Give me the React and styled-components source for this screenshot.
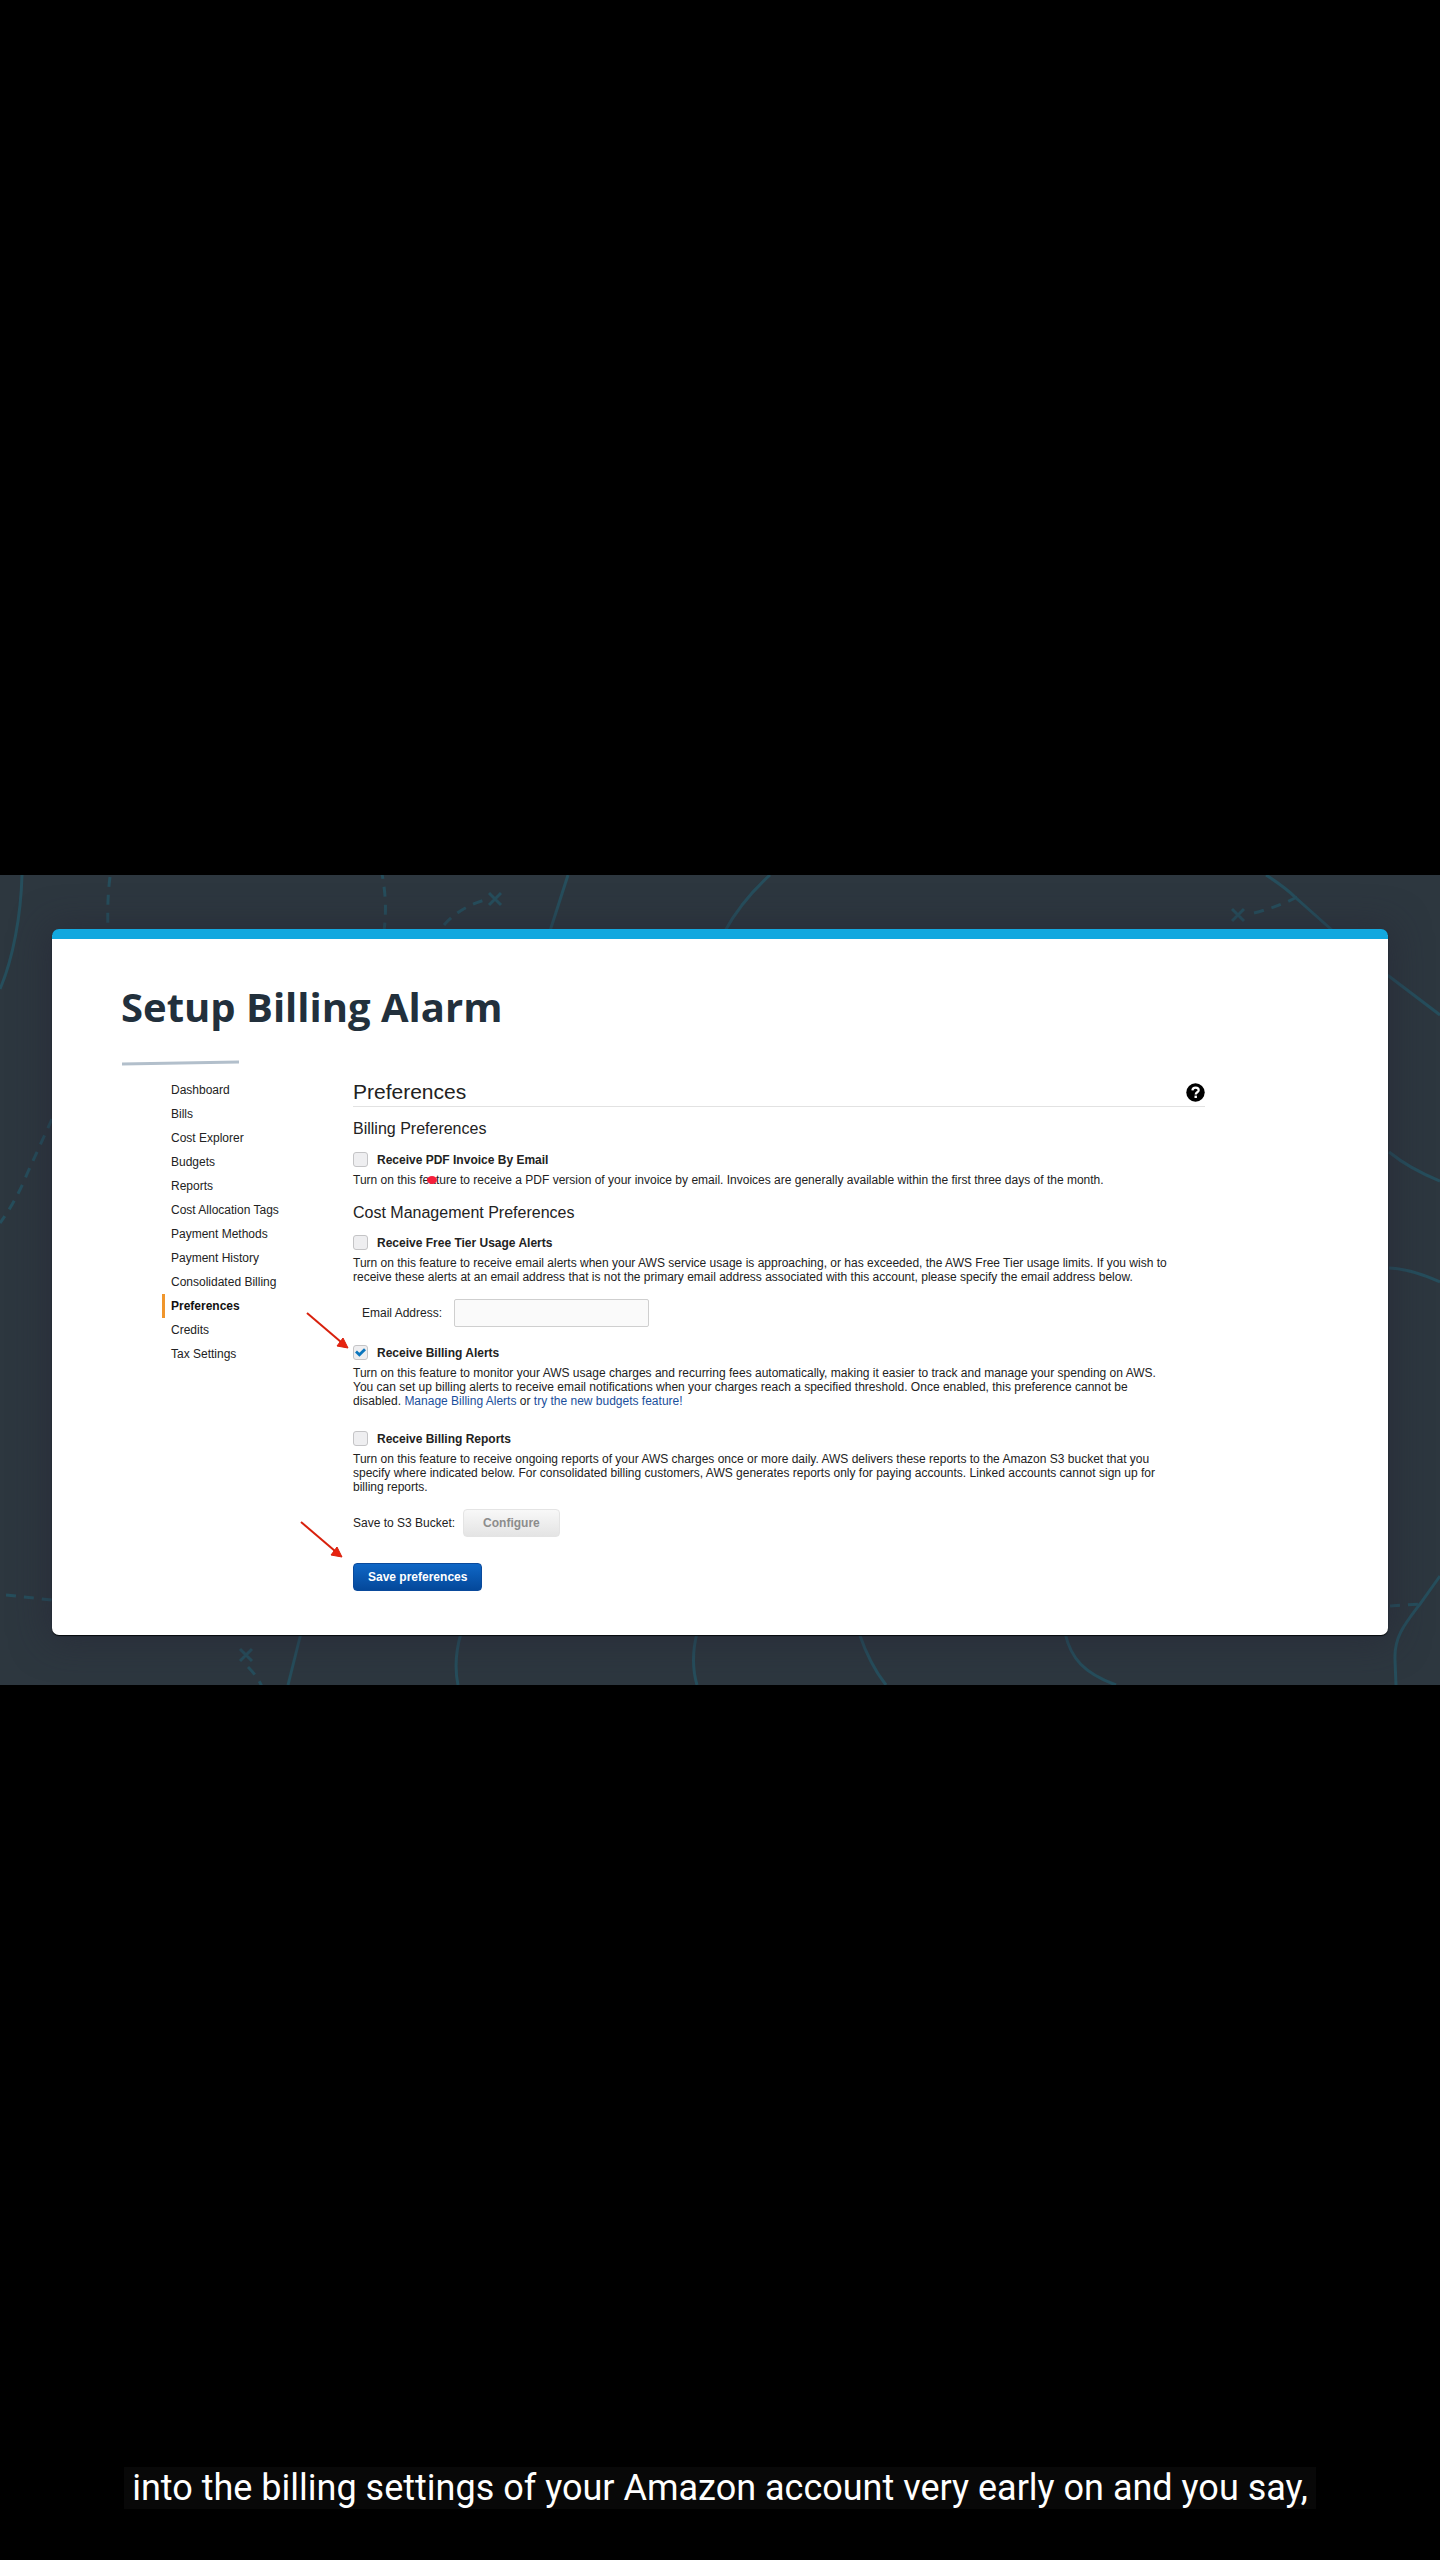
import React, { useState } from "react";
import styled, { createGlobalStyle, css } from "styled-components";

const GlobalStyle = createGlobalStyle`
  *, *::before, *::after { box-sizing: border-box; }
  body { margin: 0; background: #000; }
`;

const Player = styled.div`
  min-height: 100vh;
  display: grid;
  grid-template-columns: minmax(0, 1fr);
  grid-template-rows: minmax(0, 1fr) auto minmax(0, 1fr);
  background: #000;
`;

const Stage = styled.main`
  grid-row: 2;
  position: relative;
  isolation: isolate;
  display: flex;
  aspect-ratio: 16 / 9;
  padding: 54px 52px 50px;
  background: #2d373f;
  overflow: hidden;
`;

const MapSvg = styled.svg`
  position: absolute;
  inset: 0;
  z-index: -1;
  width: 100%;
  height: 100%;
  fill: none;
  stroke: #264e5c;
  stroke-width: 3;
`;

const Card = styled.section`
  flex: 1;
  min-width: 0;
  border-top: 10px solid #12a8df;
  border-radius: 7px;
  background: #fff;
  box-shadow: 0 1px 1px #05090c, 0 2px 36px 4px rgba(38, 38, 54, 0.6);
  padding: 36px 69px 0;
`;

const Title = styled.h1`
  margin: 0;
  font: 700 40px/64px "Open Sans", "Noto Sans", sans-serif;
  color: #22303c;
`;

const Rule = styled.svg`
  display: block;
  margin-top: 21px;
`;

const Body = styled.div`
  position: relative;
  display: flex;
  gap: 61px;
  padding-left: 41px;
  margin-top: 12px;
  font: 12px/14px "Liberation Sans", Arial, sans-serif;
  color: #222;
`;

const Menu = styled.nav`
  flex: none;
  width: 130px;
`;

const MenuLink = styled.a`
  display: block;
  padding-left: 6px;
  border-left: 3px solid ${(p) => (p.$active ? "#f0962c" : "transparent")};
  font-weight: ${(p) => (p.$active ? 700 : 400)};
  line-height: 24px;
  color: ${(p) => (p.$active ? "#111" : "#222")};
  text-decoration: none;
`;

const Content = styled.form`
  flex: 1;
  min-width: 0;
  max-width: 852px;
`;

const Heading = styled.div`
  display: flex;
  justify-content: space-between;
  align-items: center;
  height: 29px;
  border-bottom: 1px solid #e2e2e2;
`;

const PageTitle = styled.h2`
  margin: 0;
  font-size: 21px;
  font-weight: 400;
  line-height: 28px;
`;

const HelpButton = styled.button`
  display: flex;
  padding: 0;
  border: 0;
  background: none;
`;

const SectionTitle = styled.h3`
  margin: ${(p) => p.$top}px 0 0;
  font-size: 16px;
  font-weight: 400;
  line-height: 20px;
`;

const Option = styled.label`
  display: flex;
  align-items: center;
  gap: 9px;
  margin-top: ${(p) => p.$top}px;
  height: 15px;
  font-weight: 700;
`;

const TickFrame = styled.span`
  display: grid;
  place-items: center;
  width: 15px;
  height: 15px;
  > * { grid-area: 1 / 1; }
`;

const Tick = styled.input`
  appearance: none;
  width: 15px;
  height: 15px;
  margin: 0;
  border: 1px solid #c4c4c6;
  border-radius: 3px;
  background: #eeeef0;
`;

const TickMark = styled.svg`
  pointer-events: none;
`;

const Text = styled.p`
  max-width: 820px;
  margin: 6px 0 0;
`;

const TextLink = styled.a`
  color: #1a4f9c;
  text-decoration: none;
`;

const Field = styled.div`
  display: flex;
  align-items: center;
  gap: ${(p) => p.$gap}px;
  margin-top: 15px;
  padding-left: ${(p) => p.$indent || 0}px;
`;

const EmailInput = styled.input`
  width: 195px;
  height: 28px;
  padding: 0 8px;
  border: 1px solid #cfcfcf;
  border-radius: 2px;
  background: #fafafa;
  font: inherit;
`;

const Button = styled.button`
  height: 28px;
  padding: 0 ${(p) => (p.$primary ? 14 : 19)}px;
  border-radius: 4px;
  font: 700 12px/16px "Liberation Sans", Arial, sans-serif;
  ${(p) =>
    p.$primary
      ? css`
          display: block;
          margin-top: 26px;
          border: 1px solid #0a4a9c;
          background: linear-gradient(#0f67c6, #04489a);
          color: #fff;
        `
      : css`
          border: 1px solid #e4e4e4;
          background: linear-gradient(#f8f8f8, #e4e4e4);
          color: #8c8c8c;
        `}
`;

const Marks = styled.svg`
  position: absolute;
  left: 0;
  top: 0;
  width: 320px;
  height: 500px;
  pointer-events: none;
`;

const Caption = styled.p`
  grid-row: 3;
  align-self: end;
  justify-self: center;
  margin: 0 0 51px;
  padding: 0 8px;
  background: #080808;
  font: 36px/42px Roboto, sans-serif;
  color: #fff;
`;

const menu = [
  "Dashboard",
  "Bills",
  "Cost Explorer",
  "Budgets",
  "Reports",
  "Cost Allocation Tags",
  "Payment Methods",
  "Payment History",
  "Consolidated Billing",
  "Preferences",
  "Credits",
  "Tax Settings",
];

function TreasureMap() {
  return (
    <MapSvg viewBox="0 0 1440 810" preserveAspectRatio="none" aria-hidden="true">
      <path d="M22 0C21 40 13 84 0 114" />
      <path d="M568 0L550 56" />
      <path d="M770 0C750 18 737 34 725 56" />
      <path d="M1266 0C1280 9 1288 15 1296 23L1333 56C1352 74 1372 90 1390 102L1440 140" />
      <path d="M1389 277Q1410 294 1440 306" />
      <path d="M1389 393Q1412 394 1440 407" />
      <path d="M301 758L288 810" />
      <path d="M461 758Q453 786 458 810" />
      <path d="M697 758Q690 786 697 810" />
      <path d="M859 758Q870 790 886 810" />
      <path d="M1065 758C1071 784 1084 798 1116 810" />
      <path d="M1440 701L1420 729C1404 750 1394 762 1395 785L1396 810" />
      <g strokeDasharray="10 8">
        <path d="M110 2Q107 24 108 56" />
        <path d="M381 -6Q388 26 384 56" />
        <path d="M444 50Q460 32 485 25" />
        <path d="M1254 38Q1278 32 1297 22" />
        <path d="M52 244L27 299Q16 326 0 348" />
        <path d="M6 720L52 725" />
        <path d="M248 792Q258 802 262 812" />
        <path d="M1390 731L1420 729" />
      </g>
      <path d="M489 18L501 30M501 18L489 30" />
      <path d="M1232 34L1244 46M1244 34L1232 46" />
      <path d="M240 774L252 786M252 774L240 786" />
    </MapSvg>
  );
}

function HelpIcon() {
  return (
    <svg width="19" height="19" viewBox="0 0 19 19" aria-hidden="true">
      <circle cx="9.5" cy="9.5" r="9.2" fill="#000" />
      <path d="M6.4 7.4C6.5 5.4 7.8 4.6 9.6 4.6S12.7 5.6 12.7 7.2C12.7 9.2 9.7 9.3 9.7 11.4" fill="none" stroke="#fff" strokeWidth="2.2" />
      <rect x="8.5" y="12.6" width="2.4" height="2.4" fill="#fff" />
    </svg>
  );
}

function Preference({ top, label, initial = false }) {
  const [checked, setChecked] = useState(initial);
  return (
    <Option $top={top}>
      <TickFrame>
        <Tick type="checkbox" checked={checked} onChange={(e) => setChecked(e.target.checked)} />
        {checked && (
          <TickMark width="11" height="9" viewBox="0 0 11 9">
            <path d="M1 3.6L4.4 6.8L10 1.2" fill="none" stroke="#0b76bd" strokeWidth="2.8" />
          </TickMark>
        )}
      </TickFrame>
      {label}
    </Option>
  );
}

export default function App() {
  return (
    <>
      <GlobalStyle />
      <Player>
        <Stage>
          <TreasureMap />
          <Card>
            <Title>Setup Billing Alarm</Title>
            <Rule width="119" height="6" viewBox="0 0 119 6" aria-hidden="true">
              <path d="M1 4L118 2" stroke="#b2bfcb" strokeWidth="3" />
            </Rule>
            <Body>
              <Menu>
                {menu.map((item) => (
                  <MenuLink key={item} href="#" $active={item === "Preferences"}>
                    {item}
                  </MenuLink>
                ))}
              </Menu>
              <Content onSubmit={(e) => e.preventDefault()}>
                <Heading>
                  <PageTitle>Preferences</PageTitle>
                  <HelpButton type="button" aria-label="Help">
                    <HelpIcon />
                  </HelpButton>
                </Heading>
                <SectionTitle $top={12}>Billing Preferences</SectionTitle>
                <Preference top={13} label="Receive PDF Invoice By Email" />
                <Text>
                  Turn on this feature to receive a PDF version of your invoice by email. Invoices are generally
                  available within the first three days of the month.
                </Text>
                <SectionTitle $top={16}>Cost Management Preferences</SectionTitle>
                <Preference top={12} label="Receive Free Tier Usage Alerts" />
                <Text>
                  Turn on this feature to receive email alerts when your AWS service usage is approaching, or has
                  exceeded, the AWS Free Tier usage limits. If you wish to receive these alerts at an email address
                  that is not the primary email address associated with this account, please specify the email
                  address below.
                </Text>
                <Field $gap={12} $indent={9}>
                  <label htmlFor="email">Email Address:</label>
                  <EmailInput id="email" type="email" />
                </Field>
                <Preference top={18} label="Receive Billing Alerts" initial />
                <Text>
                  Turn on this feature to monitor your AWS usage charges and recurring fees automatically, making it
                  easier to track and manage your spending on AWS. You can set up billing alerts to receive email
                  notifications when your charges reach a specified threshold. Once enabled, this preference cannot
                  be disabled. <TextLink href="#">Manage Billing Alerts</TextLink> or{" "}
                  <TextLink href="#">try the new budgets feature!</TextLink>
                </Text>
                <Preference top={23} label="Receive Billing Reports" />
                <Text>
                  Turn on this feature to receive ongoing reports of your AWS charges once or more daily. AWS delivers
                  these reports to the Amazon S3 bucket that you specify where indicated below. For consolidated
                  billing customers, AWS generates reports only for paying accounts. Linked accounts cannot sign up
                  for billing reports.
                </Text>
                <Field $gap={8}>
                  <span>Save to S3 Bucket:</span>
                  <Button type="button">Configure</Button>
                </Field>
                <Button type="submit" $primary>
                  Save preferences
                </Button>
              </Content>
              <Marks viewBox="0 0 320 500" aria-hidden="true">
                <g stroke="#d8200c" strokeWidth="2" fill="#e8230f">
                  <path d="M186 235L220 264" />
                  <path d="M180 444L214 473" />
                  <path d="M227 270L216 268L222 260Z" strokeWidth="1" />
                  <path d="M221 479L210 477L216 469Z" strokeWidth="1" />
                </g>
                <ellipse cx="311" cy="102" rx="5" ry="4" fill="#f5203c" />
              </Marks>
            </Body>
          </Card>
        </Stage>
        <Caption>into the billing settings of your Amazon account very early on and you say,</Caption>
      </Player>
    </>
  );
}
